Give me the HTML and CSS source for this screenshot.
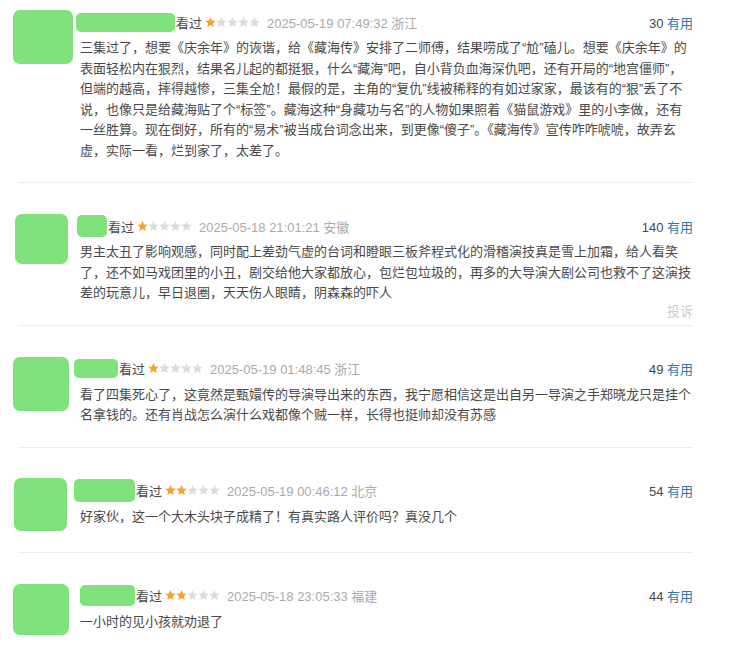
FILE: index.html
```html
<!DOCTYPE html>
<html lang="zh-CN">
<head>
<meta charset="utf-8">
<title>短评</title>
<link rel="stylesheet" href="styles.css">
</head>
<body>
<div class="list">

  <div class="review">
    <div class="avatar-col"><div class="avatar" style="--x:1px;--y:-1px;--w:60px;--h:54px"></div></div>
    <div class="body">
      <div class="header">
        <span class="name" style="--x:-4px;--w:99px;--h:19px"></span>
        <span class="watched">看过</span>
        <span class="stars">
          <svg class="on" viewBox="0 0 12 12"><polygon points="6,0 7.65,3.73 11.71,4.15 8.67,6.87 9.53,10.85 6,8.8 2.47,10.85 3.33,6.87 0.29,4.15 4.35,3.73"/></svg>
          <svg viewBox="0 0 12 12"><polygon points="6,0 7.65,3.73 11.71,4.15 8.67,6.87 9.53,10.85 6,8.8 2.47,10.85 3.33,6.87 0.29,4.15 4.35,3.73"/></svg>
          <svg viewBox="0 0 12 12"><polygon points="6,0 7.65,3.73 11.71,4.15 8.67,6.87 9.53,10.85 6,8.8 2.47,10.85 3.33,6.87 0.29,4.15 4.35,3.73"/></svg>
          <svg viewBox="0 0 12 12"><polygon points="6,0 7.65,3.73 11.71,4.15 8.67,6.87 9.53,10.85 6,8.8 2.47,10.85 3.33,6.87 0.29,4.15 4.35,3.73"/></svg>
          <svg viewBox="0 0 12 12"><polygon points="6,0 7.65,3.73 11.71,4.15 8.67,6.87 9.53,10.85 6,8.8 2.47,10.85 3.33,6.87 0.29,4.15 4.35,3.73"/></svg>
        </span>
        <span class="date">2025-05-19 07:49:32 浙江</span>
        <span class="votes">30 <span class="useful">有用</span></span>
      </div>
      <p class="text">三集过了，想要《庆余年》的诙谐，给《藏海传》安排了二师傅，结果唠成了“尬”磕儿。想要《庆余年》的表面轻松内在狠烈，结果名儿起的都挺狠，什么“藏海”吧，自小背负血海深仇吧，还有开局的“地宫僵师”，但端的越高，摔得越惨，三集全尬！最假的是，主角的“复仇”线被稀释的有如过家家，最该有的“狠”丢了不说，也像只是给藏海贴了个“标签”。藏海这种“身藏功与名”的人物如果照着《猫鼠游戏》里的小李做，还有一丝胜算。现在倒好，所有的“易术”被当成台词念出来，到更像“傻子”。《藏海传》宣传咋咋唬唬，故弄玄虚，实际一看，烂到家了，太差了。</p>
    </div>
  </div>

  <div class="review">
    <div class="avatar-col"><div class="avatar" style="--x:3px;--y:-1px;--w:53px;--h:50px"></div></div>
    <div class="body">
      <div class="header">
        <span class="name" style="--x:-3px;--w:30px;--h:22px"></span>
        <span class="watched">看过</span>
        <span class="stars">
          <svg class="on" viewBox="0 0 12 12"><polygon points="6,0 7.65,3.73 11.71,4.15 8.67,6.87 9.53,10.85 6,8.8 2.47,10.85 3.33,6.87 0.29,4.15 4.35,3.73"/></svg>
          <svg viewBox="0 0 12 12"><polygon points="6,0 7.65,3.73 11.71,4.15 8.67,6.87 9.53,10.85 6,8.8 2.47,10.85 3.33,6.87 0.29,4.15 4.35,3.73"/></svg>
          <svg viewBox="0 0 12 12"><polygon points="6,0 7.65,3.73 11.71,4.15 8.67,6.87 9.53,10.85 6,8.8 2.47,10.85 3.33,6.87 0.29,4.15 4.35,3.73"/></svg>
          <svg viewBox="0 0 12 12"><polygon points="6,0 7.65,3.73 11.71,4.15 8.67,6.87 9.53,10.85 6,8.8 2.47,10.85 3.33,6.87 0.29,4.15 4.35,3.73"/></svg>
          <svg viewBox="0 0 12 12"><polygon points="6,0 7.65,3.73 11.71,4.15 8.67,6.87 9.53,10.85 6,8.8 2.47,10.85 3.33,6.87 0.29,4.15 4.35,3.73"/></svg>
        </span>
        <span class="date">2025-05-18 21:01:21 安徽</span>
        <span class="votes">140 <span class="useful">有用</span></span>
      </div>
      <p class="text">男主太丑了影响观感，同时配上差劲气虚的台词和瞪眼三板斧程式化的滑稽演技真是雪上加霜，给人看笑了，还不如马戏团里的小丑，剧交给他大家都放心，包烂包垃圾的，再多的大导演大剧公司也救不了这演技差的玩意儿，早日退圈，天天伤人眼睛，阴森森的吓人</p>
      <div class="report">投诉</div>
    </div>
  </div>

  <div class="review">
    <div class="avatar-col"><div class="avatar" style="--x:1px;--y:-1px;--w:56px;--h:54px"></div></div>
    <div class="body">
      <div class="header">
        <span class="name" style="--x:-6px;--w:44px;--h:19px"></span>
        <span class="watched">看过</span>
        <span class="stars">
          <svg class="on" viewBox="0 0 12 12"><polygon points="6,0 7.65,3.73 11.71,4.15 8.67,6.87 9.53,10.85 6,8.8 2.47,10.85 3.33,6.87 0.29,4.15 4.35,3.73"/></svg>
          <svg viewBox="0 0 12 12"><polygon points="6,0 7.65,3.73 11.71,4.15 8.67,6.87 9.53,10.85 6,8.8 2.47,10.85 3.33,6.87 0.29,4.15 4.35,3.73"/></svg>
          <svg viewBox="0 0 12 12"><polygon points="6,0 7.65,3.73 11.71,4.15 8.67,6.87 9.53,10.85 6,8.8 2.47,10.85 3.33,6.87 0.29,4.15 4.35,3.73"/></svg>
          <svg viewBox="0 0 12 12"><polygon points="6,0 7.65,3.73 11.71,4.15 8.67,6.87 9.53,10.85 6,8.8 2.47,10.85 3.33,6.87 0.29,4.15 4.35,3.73"/></svg>
          <svg viewBox="0 0 12 12"><polygon points="6,0 7.65,3.73 11.71,4.15 8.67,6.87 9.53,10.85 6,8.8 2.47,10.85 3.33,6.87 0.29,4.15 4.35,3.73"/></svg>
        </span>
        <span class="date">2025-05-19 01:48:45 浙江</span>
        <span class="votes">49 <span class="useful">有用</span></span>
      </div>
      <p class="text">看了四集死心了，这竟然是甄嬛传的导演导出来的东西，我宁愿相信这是出自另一导演之手郑晓龙只是挂个名拿钱的。还有肖战怎么演什么戏都像个贼一样，长得也挺帅却没有苏感</p>
    </div>
  </div>

  <div class="review">
    <div class="avatar-col"><div class="avatar" style="--x:2px;--y:-2px;--w:53px;--h:53px"></div></div>
    <div class="body">
      <div class="header">
        <span class="name" style="--x:-6px;--w:61px;--h:23px"></span>
        <span class="watched">看过</span>
        <span class="stars">
          <svg class="on" viewBox="0 0 12 12"><polygon points="6,0 7.65,3.73 11.71,4.15 8.67,6.87 9.53,10.85 6,8.8 2.47,10.85 3.33,6.87 0.29,4.15 4.35,3.73"/></svg>
          <svg class="on" viewBox="0 0 12 12"><polygon points="6,0 7.65,3.73 11.71,4.15 8.67,6.87 9.53,10.85 6,8.8 2.47,10.85 3.33,6.87 0.29,4.15 4.35,3.73"/></svg>
          <svg viewBox="0 0 12 12"><polygon points="6,0 7.65,3.73 11.71,4.15 8.67,6.87 9.53,10.85 6,8.8 2.47,10.85 3.33,6.87 0.29,4.15 4.35,3.73"/></svg>
          <svg viewBox="0 0 12 12"><polygon points="6,0 7.65,3.73 11.71,4.15 8.67,6.87 9.53,10.85 6,8.8 2.47,10.85 3.33,6.87 0.29,4.15 4.35,3.73"/></svg>
          <svg viewBox="0 0 12 12"><polygon points="6,0 7.65,3.73 11.71,4.15 8.67,6.87 9.53,10.85 6,8.8 2.47,10.85 3.33,6.87 0.29,4.15 4.35,3.73"/></svg>
        </span>
        <span class="date">2025-05-19 00:46:12 北京</span>
        <span class="votes">54 <span class="useful">有用</span></span>
      </div>
      <p class="text">好家伙，这一个大木头块子成精了！有真实路人评价吗？真没几个</p>
    </div>
  </div>

  <div class="review">
    <div class="avatar-col"><div class="avatar" style="--x:1px;--y:-1px;--w:56px;--h:51px"></div></div>
    <div class="body">
      <div class="header">
        <span class="name" style="--x:0px;--w:55px;--h:21px"></span>
        <span class="watched">看过</span>
        <span class="stars">
          <svg class="on" viewBox="0 0 12 12"><polygon points="6,0 7.65,3.73 11.71,4.15 8.67,6.87 9.53,10.85 6,8.8 2.47,10.85 3.33,6.87 0.29,4.15 4.35,3.73"/></svg>
          <svg class="on" viewBox="0 0 12 12"><polygon points="6,0 7.65,3.73 11.71,4.15 8.67,6.87 9.53,10.85 6,8.8 2.47,10.85 3.33,6.87 0.29,4.15 4.35,3.73"/></svg>
          <svg viewBox="0 0 12 12"><polygon points="6,0 7.65,3.73 11.71,4.15 8.67,6.87 9.53,10.85 6,8.8 2.47,10.85 3.33,6.87 0.29,4.15 4.35,3.73"/></svg>
          <svg viewBox="0 0 12 12"><polygon points="6,0 7.65,3.73 11.71,4.15 8.67,6.87 9.53,10.85 6,8.8 2.47,10.85 3.33,6.87 0.29,4.15 4.35,3.73"/></svg>
          <svg viewBox="0 0 12 12"><polygon points="6,0 7.65,3.73 11.71,4.15 8.67,6.87 9.53,10.85 6,8.8 2.47,10.85 3.33,6.87 0.29,4.15 4.35,3.73"/></svg>
        </span>
        <span class="date">2025-05-18 23:05:33 福建</span>
        <span class="votes">44 <span class="useful">有用</span></span>
      </div>
      <p class="text">一小时的见小孩就劝退了</p>
    </div>
  </div>

</div>
</body>
</html>
```

FILE: styles.css
```css
body {
  margin: 0;
  background: #fff;
  font-family: "Liberation Sans", "Noto Sans CJK SC", sans-serif;
  font-size: 13px;
  color: #494949;
}

.list {
  margin-left: 18px;
  width: 675px;
}

.review {
  display: flex;
  padding: 32px 0 21px;
  border-bottom: 1px solid #ececec;
}

.review:first-child {
  padding-top: 11px;
}

.review:last-child {
  border-bottom: none;
}

.avatar-col {
  flex: 0 0 68px;
  margin-left: -6px;
}

.avatar {
  background: #80e27c;
  border-radius: 7px;
  width: var(--w);
  height: var(--h);
  margin-left: var(--x);
  margin-top: var(--y);
}

.body {
  flex: 1;
  min-width: 0;
}

.header {
  display: flex;
  align-items: center;
  height: 22px;
  white-space: nowrap;
}

.name {
  flex: none;
  background: #80e27c;
  border-radius: 5px;
  width: var(--w);
  height: var(--h);
  margin-left: var(--x);
}

.watched {
  margin-left: 1px;
  color: #494949;
}

.stars {
  display: flex;
  margin-left: 3px;
}

.stars svg {
  width: 11px;
  height: 11px;
  fill: #dcdcdc;
}

.stars svg.on {
  fill: #f7a22c;
}

.date {
  margin-left: 7px;
  color: #aaa;
}

.votes {
  margin-left: auto;
  color: #494949;
}

.useful {
  color: #3377aa;
}

.text {
  margin: 5px 0 0;
  line-height: 20.5px;
}

.report {
  text-align: right;
  color: #ccc;
  line-height: 16px;
  margin-bottom: -16px;
}
```
